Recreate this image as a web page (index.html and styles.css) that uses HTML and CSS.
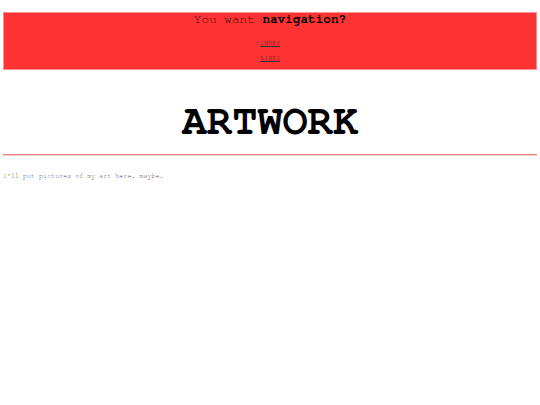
FILE: index.html
```html
<!DOCTYPE html>
<html>
<head>
<meta charset="utf-8">
<link rel="stylesheet" href="styles.css">
</head>
<body>
<div class="page">
  <header class="navbox">
    <div class="navtitle">You want <b>navigation?</b></div>
    <nav class="navlinks">
      <a href="#" class="navlink">INDEX</a>
      <a href="#" class="navlink">LINKS</a>
    </nav>
  </header>
  <h1 class="heading">ARTWORK</h1>
  <hr class="rule">
  <p class="text">I'll put pictures of my art here. maybe.</p>
</div>
</body>
</html>
```

FILE: styles.css
```css
html, body {
  margin: 0;
  padding: 0;
  background: #fff;
}
.page {
  padding: 12px 3px 0 3px;
  font-family: "FreeMono", "Liberation Mono", monospace;
  display: flex;
  flex-direction: column;
}
.navbox {
  background: #ff3333;
  border: 1px solid #ff9090;
  height: 56px;
  display: flex;
  flex-direction: column;
  align-items: center;
}
.navtitle {
  font-size: 12.7px;
  line-height: 14px;
  color: #3a0a0a;
}
.navtitle b {
  color: #000;
}
.navlinks {
  margin-top: 8.5px;
  display: flex;
  flex-direction: column;
  align-items: center;
}
.navlink {
  font-size: 6.7px;
  line-height: 15px;
  color: #333;
  text-decoration: underline;
}
.heading {
  margin: 27px 0 0 0;
  font-size: 42px;
  line-height: 48px;
  font-weight: bold;
  text-align: center;
  color: #000;
}
.rule {
  margin: 9px 0 0 0;
  border: 0;
  border-top: 1px solid #ec8080;
  border-bottom: 1px solid #f8d0d0;
  height: 0;
}
.text {
  margin: 15px 0 0 0;
  font-size: 6.7px;
  line-height: 10px;
  color: #555;
}
```
